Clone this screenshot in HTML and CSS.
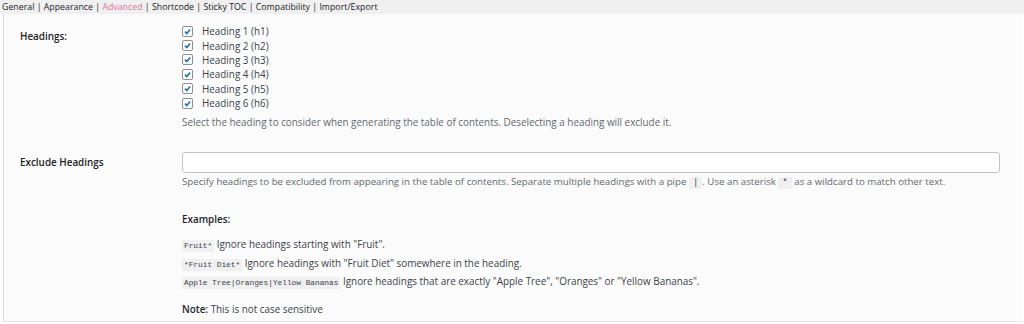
FILE: index.html
```html
<!doctype html>
<html>
  <head>
    <meta charset="UTF-8" />
    <title>Table of Contents settings</title>
    <link rel="stylesheet" href="styles.css">
  </head>
  <body>
    <div class="tabs">
      <a href="#">General</a> | <a href="#">Appearance</a> | <a href="#" class="current">Advanced</a> | <a href="#">Shortcode</a> | <a href="#">Sticky TOC</a> | <a href="#">Compatibility</a> | <a href="#">Import/Export</a>
    </div>
    <div class="panel">
      <div class="row row-headings">
        <div class="label">Headings:</div>
        <div class="field">
          <ul class="checks">
            <li><span class="box"><svg viewBox="0 0 10 10"><path d="M2.2 5.2 L4.2 7.2 L7.9 2.8" /></svg></span>Heading 1 (h1)</li>
            <li><span class="box"><svg viewBox="0 0 10 10"><path d="M2.2 5.2 L4.2 7.2 L7.9 2.8" /></svg></span>Heading 2 (h2)</li>
            <li><span class="box"><svg viewBox="0 0 10 10"><path d="M2.2 5.2 L4.2 7.2 L7.9 2.8" /></svg></span>Heading 3 (h3)</li>
            <li><span class="box"><svg viewBox="0 0 10 10"><path d="M2.2 5.2 L4.2 7.2 L7.9 2.8" /></svg></span>Heading 4 (h4)</li>
            <li><span class="box"><svg viewBox="0 0 10 10"><path d="M2.2 5.2 L4.2 7.2 L7.9 2.8" /></svg></span>Heading 5 (h5)</li>
            <li><span class="box"><svg viewBox="0 0 10 10"><path d="M2.2 5.2 L4.2 7.2 L7.9 2.8" /></svg></span>Heading 6 (h6)</li>
          </ul>
          <p class="desc">Select the heading to consider when generating the table of contents. Deselecting a heading will exclude it.</p>
        </div>
      </div>
      <div class="row row-exclude">
        <div class="label">Exclude Headings</div>
        <div class="field">
          <input type="text" class="text-input" />
          <p class="desc">Specify headings to be excluded from appearing in the table of contents. Separate multiple headings with a pipe <code>|</code>. Use an asterisk <code>*</code> as a wildcard to match other text.</p>
          <p class="examples-title">Examples:</p>
          <ul class="examples">
            <li><code>Fruit*</code> Ignore headings starting with "Fruit".</li>
            <li><code>*Fruit Diet*</code> Ignore headings with "Fruit Diet" somewhere in the heading.</li>
            <li><code>Apple Tree|Oranges|Yellow Bananas</code> Ignore headings that are exactly "Apple Tree", "Oranges" or "Yellow Bananas".</li>
          </ul>
          <p class="note"><strong>Note:</strong> This is not case sensitive</p>
        </div>
      </div>
    </div>
  </body>
</html>
```

FILE: styles.css
```css
body {
  margin: 0;
  font-family: "Open Sans", "Liberation Sans", Arial, sans-serif;
  font-size: 9.9px;
  line-height: 14px;
  color: #3c434a;
  background: #fff;
  -webkit-font-smoothing: antialiased;
}
.tabs {
  height: 14px;
  line-height: 14px;
  padding-left: 2px;
  background: #f0f0f1;
  color: #1d2327;
  font-size: 8.8px;
}
.tabs a {
  color: #1d2327;
  text-decoration: none;
}
.tabs a.current {
  color: #e5709b;
}
.panel {
  margin-left: 3px;
  margin-right: 1px;
  height: 307px;
  border-left: 1px solid #dcdcde;
  border-bottom: 1px solid #e4e4e6;
  background: #fbfbfb;
}
.row {
  display: flex;
}
.label {
  width: 162px;
  padding-left: 16px;
  font-weight: 600;
  color: #1d2327;
  flex-shrink: 0;
}
.row-headings {
  padding-top: 10px;
}
.row-headings .label {
  padding-top: 5px;
}
.field {
  flex: 1;
  padding-right: 23px;
}
.checks {
  list-style: none;
  margin: 0;
  padding: 0;
}
.checks li {
  display: flex;
  align-items: center;
  height: 14.4px;
}
.box {
  width: 9px;
  height: 9px;
  border: 1px solid #8c8f94;
  border-radius: 2px;
  background: #fff;
  margin-right: 9px;
  display: inline-flex;
}
.box svg {
  width: 9px;
  height: 9px;
}
.box path {
  fill: none;
  stroke: #2271b1;
  stroke-width: 1.8;
}
.desc {
  margin: 5px 0 0;
  color: #646970;
}
.row-exclude {
  padding-top: 23px;
}
.row-exclude .label {
  padding-top: 3px;
}
.text-input {
  display: block;
  width: 100%;
  height: 21px;
  box-sizing: border-box;
  border: 1px solid #c3c4c7;
  border-radius: 3px;
  background: #fff;
  margin: 0;
}
.row-exclude .desc {
  margin-top: 2px;
  font-size: 9.7px;
}
code {
  font-family: "Liberation Mono", "DejaVu Sans Mono", monospace;
  font-size: 7.8px;
  line-height: 1;
  background: #f0f0f1;
  color: #3c434a;
  padding: 2px 2px;
}
.desc code {
  font-size: 9px;
  padding: 1px 4px;
}
.examples-title {
  margin: 23px 0 0;
  font-weight: 600;
  color: #1d2327;
}
.examples {
  list-style: none;
  margin: 9px 0 0;
  padding: 0;
}
.examples li {
  height: 18.5px;
  line-height: 18.5px;
}
.note {
  margin: 11px 0 0;
}
.note strong {
  font-weight: 600;
  color: #1d2327;
}
```
